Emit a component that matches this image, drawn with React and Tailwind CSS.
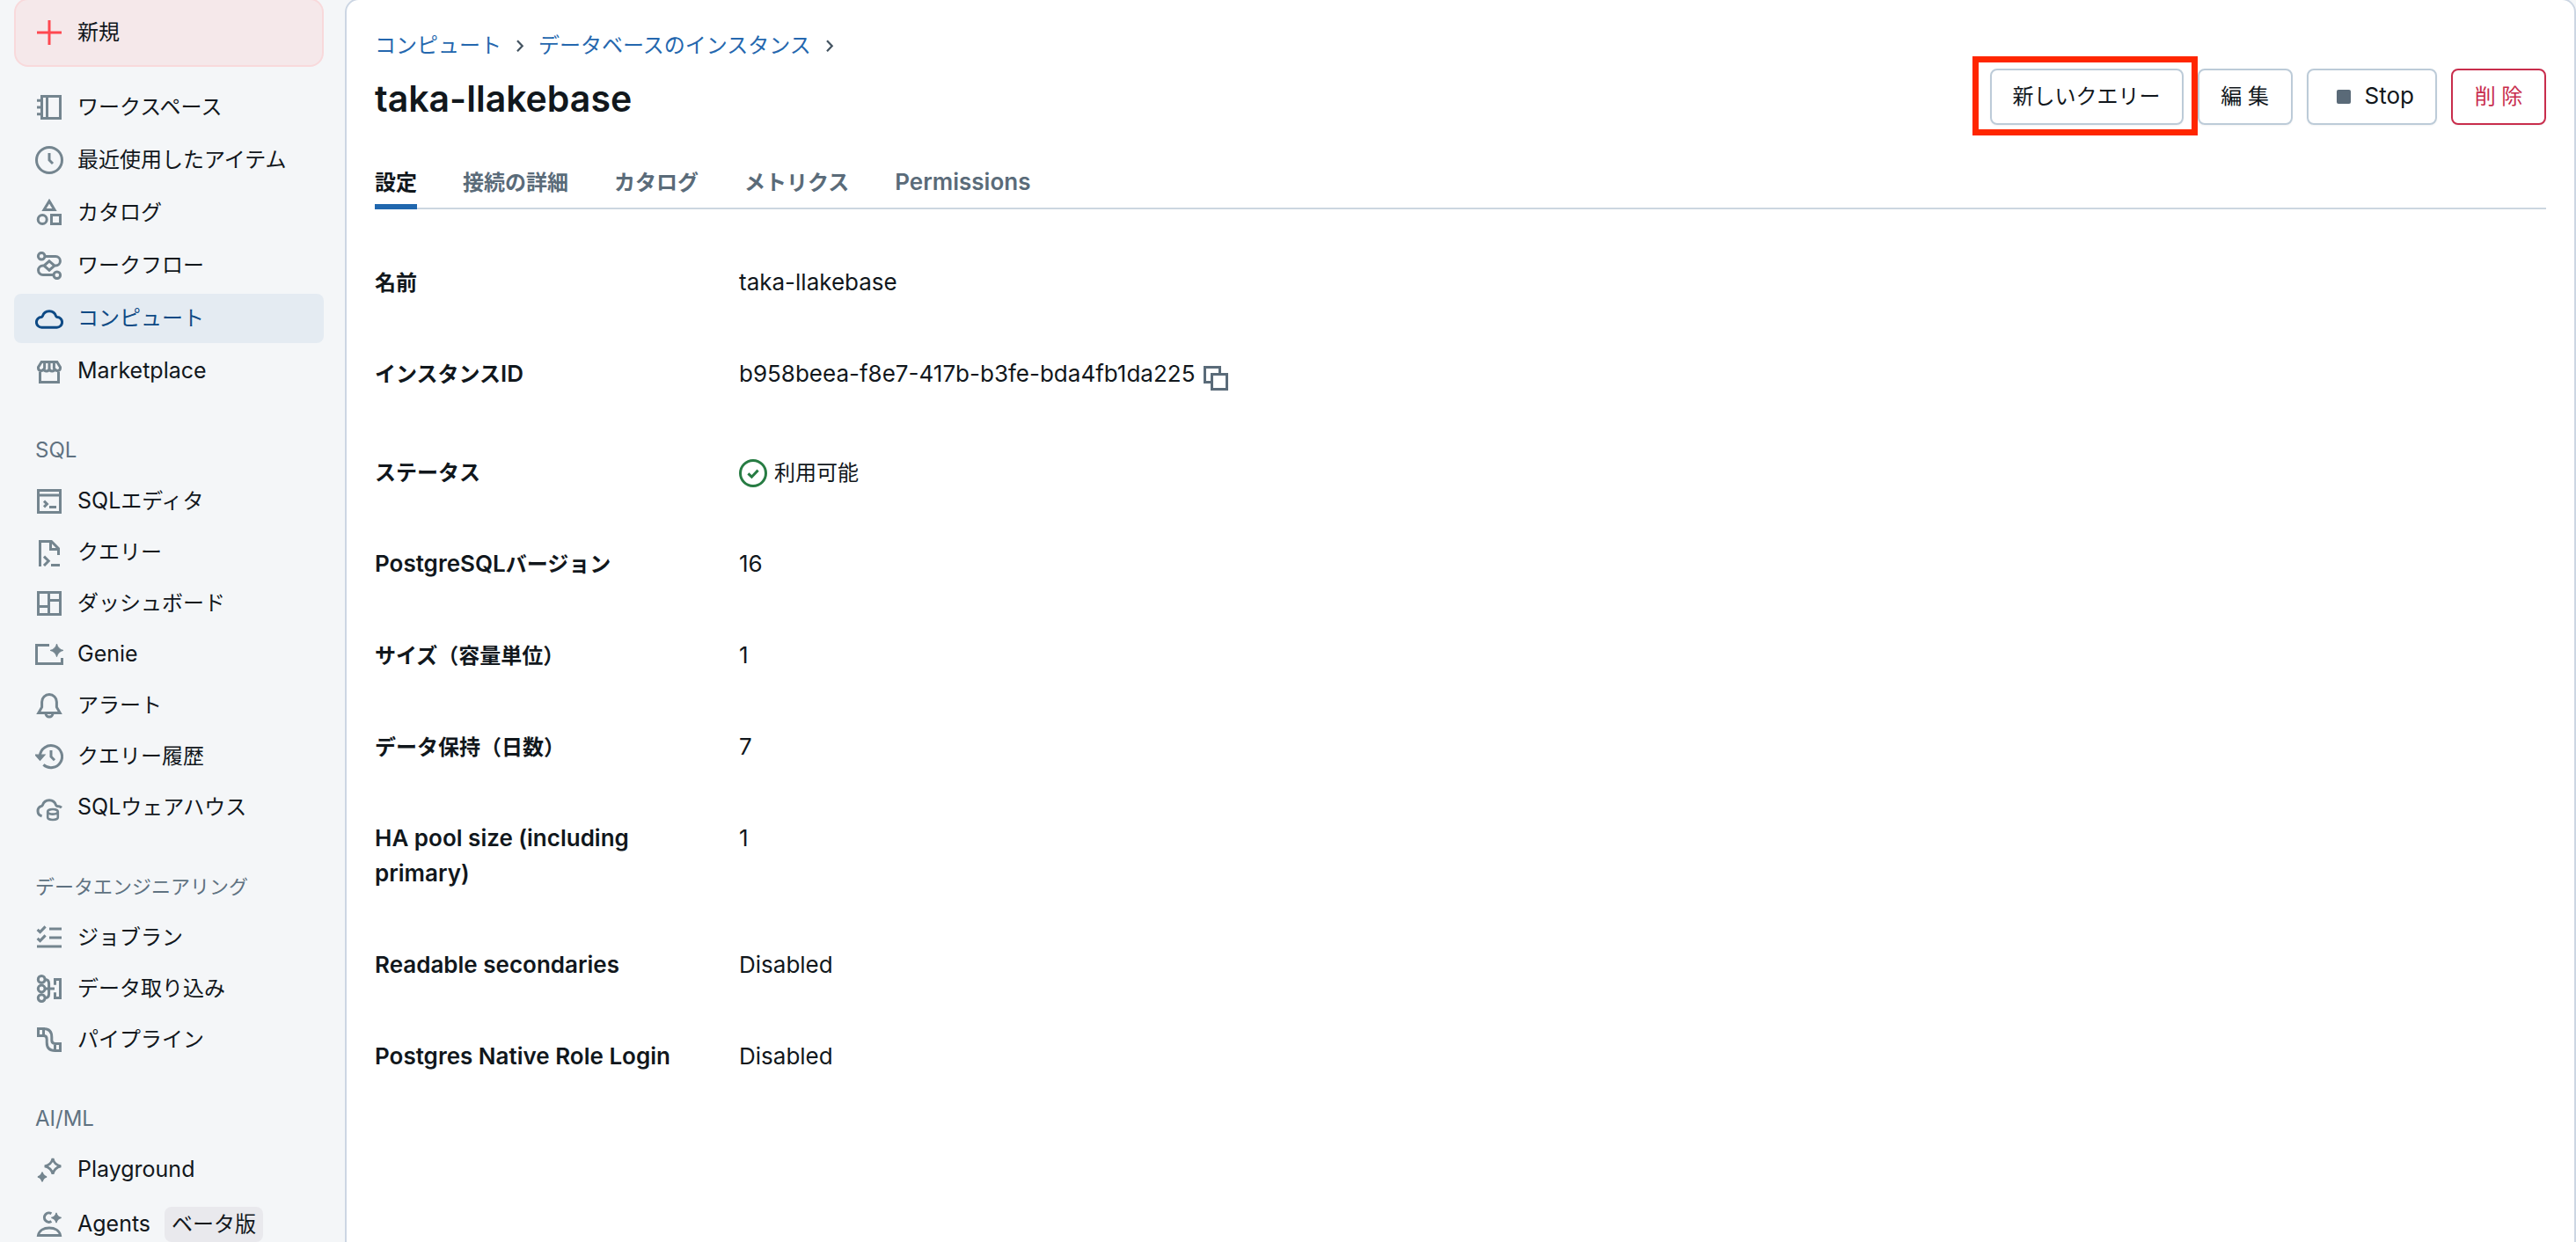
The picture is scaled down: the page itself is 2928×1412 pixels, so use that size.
import React, { useState } from 'react';

const icons = {
  plus: <path d="M8 1v14M1 8h14" />,
  notebook: <path d="M3.75 1.75h10.5v12.5H3.75zM6.75 1.75v12.5M1 4.1h2.5M1 8h2.5M1 11.9h2.5" />,
  clock: (
    <>
      <circle cx="8" cy="8" r="7.25" />
      <path d="M8 4v4l2 2" />
    </>
  ),
  shapes: (
    <>
      <path d="M8 1.3 11 6.25H5z" />
      <circle cx="4.1" cy="11.75" r="2.5" />
      <path d="M9.25 9.25h5v5h-5z" />
    </>
  ),
  workflow: (
    <>
      <circle cx="3.6" cy="2.6" r="1.9" />
      <circle cx="12.4" cy="13.4" r="1.9" />
      <path d="M5.5 2.75h6.1a2.6 2.6 0 0 1 0 5.25H11M5 8h-.6a2.6 2.6 0 0 0 0 5.25h6.1M8 5.4 11 8l-3 2.6L5 8z" />
    </>
  ),
  cloud: <path d="M3.7 13.1a2.95 2.95 0 0 1-.1-5.9c.3 0 .5-.2.6-.5a3.95 3.95 0 0 1 7.6 0c.1.3.3.5.6.5a2.95 2.95 0 0 1-.1 5.9z" />,
  store: (
    <path d="M2.75 8.5v5.75h10.5V8.5M3.6 2.75h8.8l1.85 3v.6a1.6 1.6 0 0 1-3.1.3 1.6 1.6 0 0 1-3.15 0 1.6 1.6 0 0 1-3.15 0 1.6 1.6 0 0 1-3.1-.3v-.6zM5.3 2.75v4M8 2.75v4M10.7 2.75v4" />
  ),
  editor: <path d="M1.75 1.75h12.5v12.5H1.75zM1.75 4.5h12.5M5 7.8l1.7 1.7L5 11.2M8 11.25h4" />,
  queryFile: <path d="M2.75 16V1.75H9.2l4.05 4.05V9.5M8.75 1.75v4.5h4.5M5 10.3l2.6 2.6L5 15.5M9 15.2h5" />,
  dashboard: <path d="M1.75 1.75h12.5v12.5H1.75zM7.75 1.75v12.5M1.75 9.75h6M7.75 6.25h6.5" />,
  genie: (
    <>
      <path d="M8 2.75H.75v10.5h14.5V10" />
      <path d="M12.25 2Q13 5 16 5.7 13 6.4 12.25 9.4 11.5 6.4 8.5 5.7 11.5 5 12.25 2z" fill="currentColor" strokeWidth="0.4" />
    </>
  ),
  bell: <path d="M8 1.75a4.2 4.2 0 0 0-4.2 4.2v3L1.9 12.25h12.2L12.2 8.95v-3A4.2 4.2 0 0 0 8 1.75zM6 12.5a2 2 0 1 0 4 0" />,
  history: (
    <>
      <path d="M2.7 7.5a6.3 6.3 0 1 1 2 5.2M9 4.5v3.6l2 2" />
      <path d="M0 7.1h5.5L2.75 10.2z" fill="currentColor" strokeWidth="0.6" />
    </>
  ),
  warehouse: (
    <>
      <path d="M3.8 12.9a2.95 2.95 0 0 1-.2-5.7c.3 0 .5-.2.6-.5a3.95 3.95 0 0 1 7.6 0c.1.3.3.5.6.5.9 0 1.9.3 2.6.9" />
      <path d="M7.1 10.4c0-.8 1.3-1.4 2.9-1.4s2.9.6 2.9 1.4-1.3 1.4-2.9 1.4-2.9-.6-2.9-1.4zM7.1 10.4v3.2c0 .8 1.3 1.4 2.9 1.4s2.9-.6 2.9-1.4v-3.2" strokeWidth="1.3" />
    </>
  ),
  checklist: <path d="M1.3 3.4 2.8 4.8 5.8 1.7M1.3 8.4 2.8 9.8 5.8 6.7M8 3h7M8 8h7M1 13h14" />,
  ingest: (
    <>
      <circle cx="3.6" cy="2.7" r="1.95" />
      <circle cx="3.6" cy="8" r="1.95" />
      <circle cx="3.6" cy="13.3" r="1.95" />
      <path d="M5.5 2.7c1.6 0 2.3.7 2.3 2.3v6c0 1.6-.7 2.3-2.3 2.3M5.6 8H11M11.25 5.9V2.7h3v10.6h-3v-3.2" />
    </>
  ),
  pipeline: (
    <path d="M1.75 1.75h3v4h-3zM11.25 10.25h3v4h-3zM4.75 1.75C8.5 1.75 9.4 4 9.4 6.5v1.8c0 1.3.6 1.95 1.85 1.95M4.75 5.75c1.3 0 1.85.6 1.85 1.95v1.8c0 2.5.9 4.75 4.65 4.75" />
  ),
  sparkle: (
    <>
      <path d="M10 1.5Q10.8 5.1 14.6 5.95 10.8 6.8 10 10.4 9.2 6.8 5.4 5.95 9.2 5.1 10 1.5z" strokeWidth="1.4" />
      <path d="M4 9.4Q4.5 11.5 6.5 12 4.5 12.5 4 14.6 3.5 12.5 1.5 12 3.5 11.5 4 9.4z" fill="currentColor" strokeWidth="0.8" />
    </>
  ),
  agent: (
    <>
      <path d="M1.75 14.25C2.2 11.5 4.8 10 8 10s5.8 1.5 6.25 4.25zM9.2 1.9a2.6 2.6 0 1 0 0 4.4" />
      <path d="M12 1.4Q12.5 3.7 14.8 4.2 12.5 4.7 12 7 11.5 4.7 9.2 4.2 11.5 3.7 12 1.4z" fill="currentColor" strokeWidth="0.6" />
    </>
  ),
  check: (
    <>
      <circle cx="8" cy="8" r="7.25" />
      <path d="M5.2 8.2 7.2 10.1 10.8 6.3" />
    </>
  ),
  copy: <path d="M5 10.25H1.75V1.75h8.5V5M5.75 5.75h8.5v8.5h-8.5z" />,
  chevron: <path d="M6 4.2 9.8 8.2 6 12.2" />,
};

function Icon({ name, className }) {
  return (
    <svg
      viewBox="0 0 16 16"
      className={`shrink-0 ${className}`}
      fill="none"
      stroke="currentColor"
      strokeWidth="1.5"
      aria-hidden="true"
    >
      {icons[name]}
    </svg>
  );
}

// Latin runs are set a bit larger than the Japanese around them
function Text({ children, latin = 'text-[26px]' }) {
  return (
    <span>
      {children.split(/([\x20-\x7e]+)/).filter(Boolean).map((part, i) =>
        /^[\x20-\x7e]/.test(part) ? <span key={i} className={`leading-none ${latin}`}>{part}</span> : part
      )}
    </span>
  );
}

const mainNav = [
  { label: 'ワークスペース', icon: 'notebook' },
  { label: '最近使用したアイテム', icon: 'clock' },
  { label: 'カタログ', icon: 'shapes' },
  { label: 'ワークフロー', icon: 'workflow' },
  { label: 'コンピュート', icon: 'cloud', active: true },
  { label: 'Marketplace', icon: 'store' },
];

const sections = [
  {
    title: 'SQL',
    items: [
      { label: 'SQLエディタ', icon: 'editor' },
      { label: 'クエリー', icon: 'queryFile' },
      { label: 'ダッシュボード', icon: 'dashboard' },
      { label: 'Genie', icon: 'genie' },
      { label: 'アラート', icon: 'bell' },
      { label: 'クエリー履歴', icon: 'history' },
      { label: 'SQLウェアハウス', icon: 'warehouse' },
    ],
  },
  {
    title: 'データエンジニアリング',
    items: [
      { label: 'ジョブラン', icon: 'checklist' },
      { label: 'データ取り込み', icon: 'ingest' },
      { label: 'パイプライン', icon: 'pipeline' },
    ],
  },
  {
    title: 'AI/ML',
    items: [
      { label: 'Playground', icon: 'sparkle' },
      { label: 'Agents', icon: 'agent', tag: 'ベータ版' },
    ],
  },
];

const tabs = ['設定', '接続の詳細', 'カタログ', 'メトリクス', 'Permissions'];

const details = [
  { label: '名前', value: 'taka-llakebase' },
  { label: 'インスタンスID', value: 'b958beea-f8e7-417b-b3fe-bda4fb1da225', copy: true },
  { label: 'ステータス', value: '利用可能', status: true },
  { label: 'PostgreSQLバージョン', value: '16' },
  { label: 'サイズ（容量単位）', value: '1' },
  { label: 'データ保持（日数）', value: '7' },
  { label: 'HA pool size (including primary)', value: '1' },
  { label: 'Readable secondaries', value: 'Disabled' },
  { label: 'Postgres Native Role Login', value: 'Disabled' },
];

function NavItem({ item }) {
  const color = item.active ? 'bg-[#e4ebf2] text-[#0e4a85]' : 'text-[#11171c]';
  return (
    <li>
      <a href="#" className={`flex items-center gap-4 rounded-lg px-6 py-3 ${color}`}>
        <Icon name={item.icon} className={item.active ? 'size-8' : 'size-8 text-[#74858f]'} />
        <Text latin="text-[25px]">{item.label}</Text>
        {item.tag && <span className="rounded-lg bg-[#e9e9ed] px-2 leading-10">{item.tag}</span>}
      </a>
    </li>
  );
}

function Sidebar() {
  return (
    <aside className="w-[392px] shrink-0 pl-4 pr-6 leading-8">
      <button className="flex h-[78px] w-full items-center gap-4 rounded-2xl border-2 border-[#f8d9db] bg-[#f5e8ea] px-[22px]">
        <Icon name="plus" className="size-8 text-[#ff4850]" />
        <span>新規</span>
      </button>
      <nav>
        <ul className="mt-[18px] flex flex-col gap-1">
          {mainNav.map((item) => (
            <NavItem key={item.label} item={item} />
          ))}
        </ul>
        {sections.map((section) => (
          <section key={section.title}>
            <h2 className="mt-11 mb-3 px-6 text-[22px] leading-9 text-[#5f7281]">
              <Text latin="text-[24px]">{section.title}</Text>
            </h2>
            <ul className="flex flex-col gap-0.5">
              {section.items.map((item) => (
                <NavItem key={item.label} item={item} />
              ))}
            </ul>
          </section>
        ))}
      </nav>
    </aside>
  );
}

function Header() {
  const button = 'flex h-16 min-w-27 items-center justify-center gap-2 rounded-lg border-2 px-6 shadow-xs';
  return (
    <header className="flex items-start justify-between">
      <div>
        <nav className="flex items-center gap-[9px] leading-10 text-[#2467ae]">
          <a href="#">コンピュート</a>
          <Icon name="chevron" className="size-6 text-[#445461]" />
          <a href="#">データベースのインスタンス</a>
          <Icon name="chevron" className="size-6 text-[#445461]" />
        </nav>
        <h1 className="mt-3 text-[41px] leading-14 font-semibold">taka-llakebase</h1>
      </div>
      <div className="mt-[46px] flex gap-4">
        <div className="relative">
          <button className={`${button} border-[#bccbd8]`}>新しいクエリー</button>
          <div className="pointer-events-none absolute -top-3.5 -right-4 -bottom-3 -left-5 border-7 border-[#ff2600]"></div>
        </div>
        <button className={`${button} border-[#bccbd8]`}>編 集</button>
        <button className={`${button} border-[#bccbd8]`}>
          <span className="flex size-8 items-center justify-center">
            <span className="size-4 rounded-xs bg-[#5a6a78]"></span>
          </span>
          <Text>Stop</Text>
        </button>
        <button className={`${button} border-[#c82d4c] text-[#c82d4c]`}>削 除</button>
      </div>
    </header>
  );
}

export default function App() {
  const [activeTab, setActiveTab] = useState('設定');

  return (
    <div className="h-screen overflow-hidden bg-[#f4f6f8] font-['Inter','Noto_Sans_CJK_JP',sans-serif] text-[24px] text-[#11171c]">
      <div className="-mt-0.5 flex h-full">
        <Sidebar />
        <main className="-mb-6 min-w-0 flex-1 rounded-2xl border-2 border-[#ccd6e3] bg-white px-8 pt-8">
          <Header />
          <div role="tablist" className="mt-[34px] flex gap-13 border-b-2 border-[#ccd6e0]">
            {tabs.map((tab) => (
              <button
                key={tab}
                role="tab"
                aria-selected={tab === activeTab}
                onClick={() => setActiveTab(tab)}
                className={`-mb-0.5 border-b-6 pt-3 pb-1 leading-10 font-semibold ${
                  tab === activeTab ? 'border-[#2067ae]' : 'border-transparent text-[#5a6b79]'
                }`}
              >
                <Text>{tab}</Text>
              </button>
            ))}
          </div>

          <dl className="pt-8">
            {details.map((row) => (
              <div
                key={row.label}
                className={`flex items-start gap-12 pb-8 leading-10 ${row.status ? 'pt-10' : 'pt-8'}`}
              >
                <dt className="w-[366px] shrink-0 font-semibold">
                  <Text>{row.label}</Text>
                </dt>
                <dd className="flex items-center gap-2">
                  {row.status && <Icon name="check" className="size-8 text-[#277c43]" />}
                  <Text>{row.value}</Text>
                  {row.copy && (
                    <button aria-label="コピー" className="self-end text-[#5a6b79]">
                      <Icon name="copy" className="size-8" />
                    </button>
                  )}
                </dd>
              </div>
            ))}
          </dl>
        </main>
      </div>
    </div>
  );
}
